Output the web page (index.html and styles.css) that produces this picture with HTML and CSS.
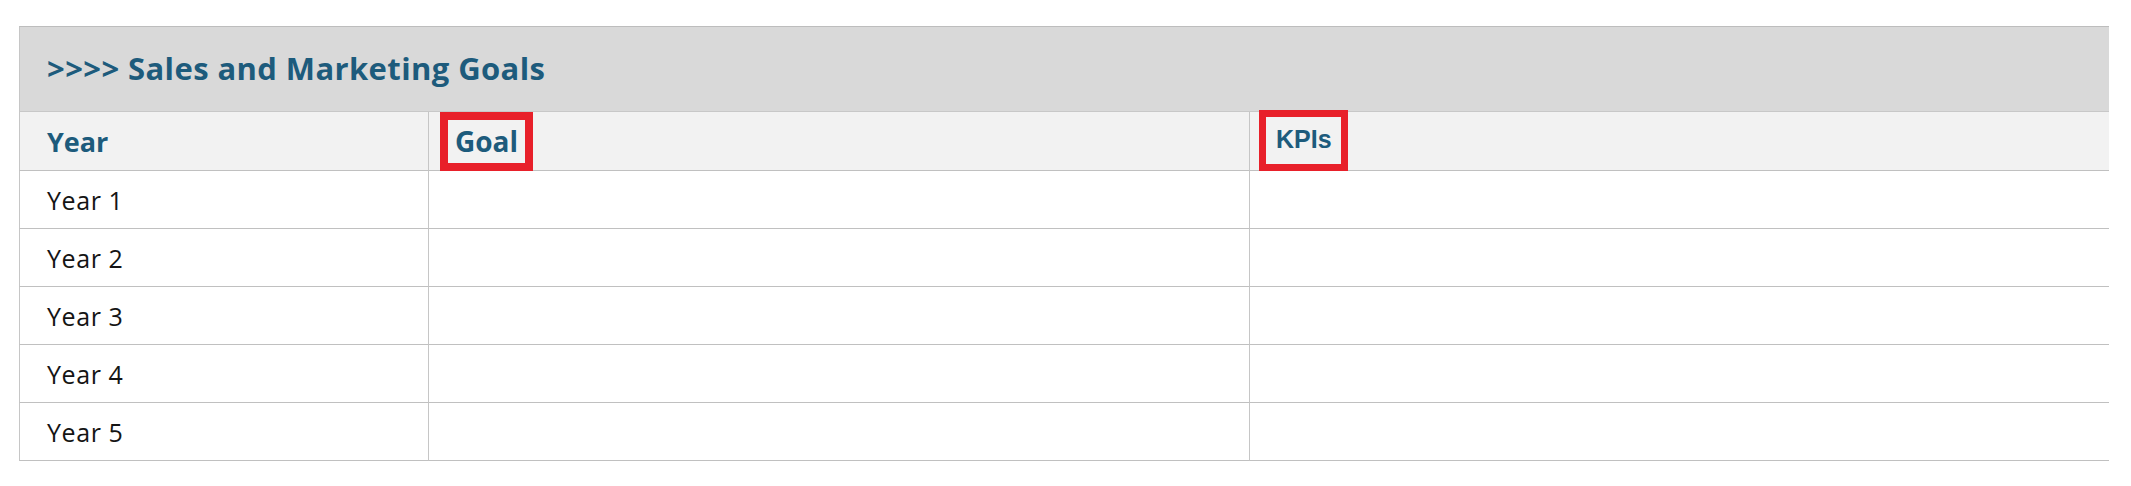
FILE: index.html
```html
<!DOCTYPE html>
<html lang="en">
<head>
<meta charset="utf-8">
<title>Sales and Marketing Goals</title>
<link rel="stylesheet" href="styles.css">
</head>
<body>
<div class="page">
  <div class="sheet">
    <div class="title">&gt;&gt;&gt;&gt; Sales and Marketing Goals</div>
    <div class="grid">
      <div class="hcell c1">Year</div>
      <div class="hcell c2 boxed"><span class="mark mark-goal">Goal</span></div>
      <div class="hcell c3 boxed boxed-kpi"><span class="mark mark-kpi">KPIs</span></div>

      <div class="cell c1">Year 1</div><div class="cell c2"></div><div class="cell c3"></div>
      <div class="cell c1">Year 2</div><div class="cell c2"></div><div class="cell c3"></div>
      <div class="cell c1">Year 3</div><div class="cell c2"></div><div class="cell c3"></div>
      <div class="cell c1">Year 4</div><div class="cell c2"></div><div class="cell c3"></div>
      <div class="cell c1">Year 5</div><div class="cell c2"></div><div class="cell c3"></div>
    </div>
  </div>
</div>
</body>
</html>
```

FILE: styles.css
```css
html, body {
  margin: 0;
  padding: 0;
  background: #ffffff;
}

.page {
  padding: 26px 22px 0 19px;
  height: 486px;
  box-sizing: border-box;
  overflow: hidden;
}

.sheet {
  width: 2090px;
  font-family: "Open Sans", "Liberation Sans", sans-serif;
}

.title {
  height: 86px;
  box-sizing: border-box;
  background: #d9d9d9;
  border-top: 1px solid #bdbdbd;
  border-left: 1px solid #c6c6c6;
  border-bottom: 1px solid #c8c8c8;
  padding-left: 27px;
  display: flex;
  align-items: center;
  color: #1d5b7c;
  font-weight: 700;
  font-size: 31px;
  letter-spacing: 0.4px;
  padding-bottom: 2px;
}

.grid {
  display: grid;
  grid-template-columns: 410px 820px 1fr;
}

.hcell, .cell {
  box-sizing: border-box;
  border-bottom: 1px solid #c0c0c0;
  display: flex;
  align-items: center;
}

.hcell {
  height: 59px;
  background: #f2f2f2;
  color: #1d5b7c;
  font-weight: 700;
  font-size: 27px;
}

.cell {
  height: 58px;
  background: #ffffff;
  color: #141414;
  font-size: 25px;
  letter-spacing: 0.6px;
}

.c1 {
  padding-left: 27px;
  border-left: 1px solid #c6c6c6;
  border-right: 1px solid #c6c6c6;
}

.c3 {
  border-left: 1px solid #c6c6c6;
}

.boxed {
  align-items: flex-start;
  padding-left: 11px;
}

.boxed-kpi {
  padding-left: 9px;
}

.mark {
  box-sizing: border-box;
  height: 59px;
  margin-bottom: -1px;
  border: 8px solid #e8202a;
  padding: 0 7px 2px 7px;
  display: inline-flex;
  align-items: center;
}

.mark-goal {
  font-size: 28px;
}

.mark-kpi {
  border-width: 7px;
  padding: 0 9px 2px 10px;
  height: 61px;
  margin-top: -2px;
  font-family: "Liberation Sans", "Open Sans", sans-serif;
  font-size: 25px;
}
```
